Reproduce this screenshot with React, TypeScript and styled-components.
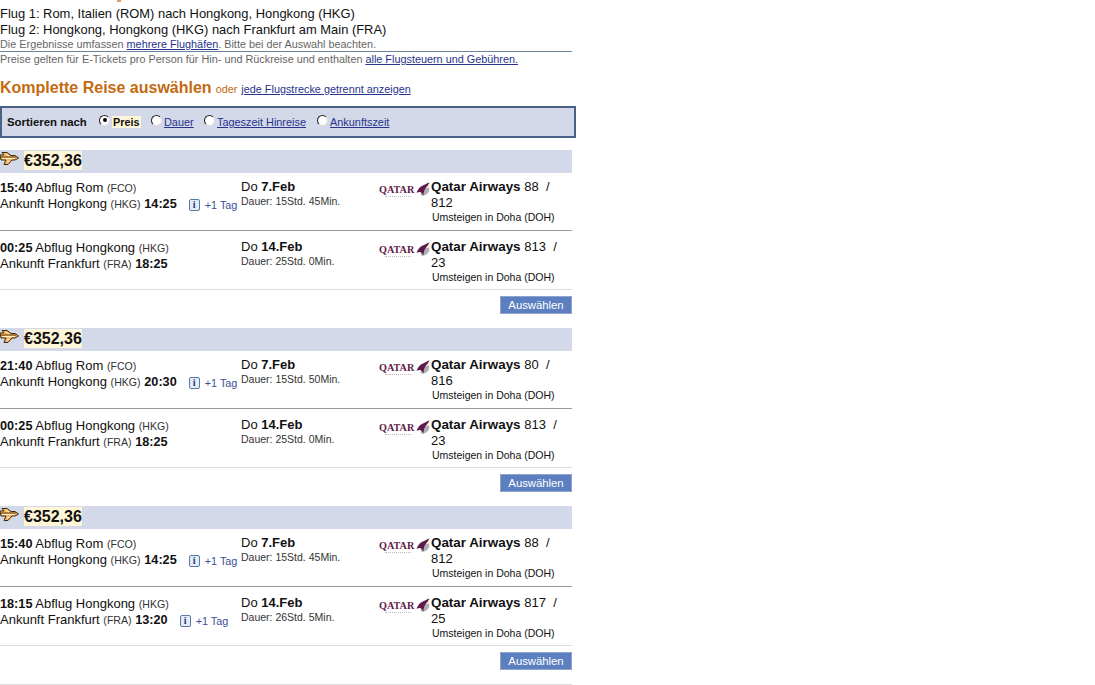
import styled, { createGlobalStyle } from 'styled-components';

const GlobalStyle = createGlobalStyle`
  html, body {
    margin: 0;
    padding: 0;
    background: #fff;
    font-family: "Liberation Sans", Arial, sans-serif;
    overflow: hidden;
  }
`;

const Page = styled.div`
  width: 576px;
  height: 685px;
  overflow: hidden;
`;

const CutHeading = styled.div`
  height: 6px;
  position: relative;
  &::after {
    content: '';
    position: absolute;
    left: 117px;
    top: 0;
    width: 4px;
    height: 2px;
    background: #e0a060;
  }
`;

const RouteLine = styled.div`
  font-size: 12.93px;
  line-height: 16px;
  height: 16px;
  color: #111;
  white-space: nowrap;
`;

const SmallNote = styled.div<{ $rule?: boolean }>`
  width: 572px;
  font-size: 10.85px;
  line-height: 14px;
  color: #666;
  white-space: nowrap;
  height: 14px;
  margin-top: ${({ $rule }) => ($rule ? '-1px' : '0')};
  border-bottom: ${({ $rule }) => ($rule ? '1px solid #6b8299' : 'none')};
  a {
    color: #27338c;
    text-decoration: underline;
  }
`;

const Heading = styled.div`
  margin-top: 13px;
  height: 19px;
  display: flex;
  align-items: baseline;
  gap: 4px;
  white-space: nowrap;
  font-size: 10.85px;
  color: #c46a10;
  a {
    color: #27338c;
    text-decoration: underline;
  }
`;

const HeadingTitle = styled.span`
  font-size: 16px;
  font-weight: bold;
  color: #c46a10;
`;

const SortBar = styled.div`
  margin: 8px 0 12px;
  box-sizing: border-box;
  width: 576px;
  height: 32px;
  border: 2px solid #4a6288;
  background: #d3d9e8;
  display: flex;
  align-items: center;
  padding-left: 5px;
  font-size: 10.9px;
  white-space: nowrap;
  a {
    color: #27338c;
    text-decoration: underline;
  }
`;

const SortLabel = styled.b`
  color: #111;
  width: 92px;
  font-size: 11.4px;
`;

const SortOption = styled.label<{ $width: number }>`
  display: flex;
  align-items: center;
  width: ${({ $width }) => $width}px;
  gap: 2px;
`;

const Radio = styled.span<{ $checked?: boolean }>`
  width: 11px;
  height: 11px;
  box-sizing: border-box;
  border-radius: 50%;
  background: #fff;
  border: 1px solid #ddd;
  border-top-color: #222;
  border-left-color: #222;
  margin-top: -4px;
  display: flex;
  align-items: center;
  justify-content: center;
  &::after {
    content: '';
    display: ${({ $checked }) => ($checked ? 'block' : 'none')};
    width: 4px;
    height: 4px;
    border-radius: 50%;
    background: #000;
  }
`;

const Selected = styled.b`
  background: #fff6d8;
  color: #111;
  padding: 0 1px;
`;

const Offer = styled.div`
  width: 572px;
  margin-bottom: 14px;
`;

const PriceBar = styled.div`
  height: 23px;
  background: #d3d9e8;
  display: flex;
  align-items: flex-start;
  gap: 5px;
`;

const PlaneIcon = styled.svg`
  width: 19px;
  height: 14px;
  margin-top: 2px;
  flex: none;
`;

const Price = styled.span`
  margin-top: 1px;
  background: #fff6d8;
  font-size: 16px;
  font-weight: bold;
  line-height: 19px;
  color: #111;
`;

const Segment = styled.div<{ $height: number; $dark?: boolean }>`
  height: ${({ $height }) => $height}px;
  box-sizing: border-box;
  padding-top: ${({ $dark }) => ($dark ? '7px' : '9px')};
  border-bottom: 1px solid ${({ $dark }) => ($dark ? '#999' : '#ddd')};
  display: grid;
  grid-template-columns: 241px 138px 52px 141px;
`;

const Times = styled.div`
  font-size: 13px;
  line-height: 16px;
  color: #111;
  white-space: nowrap;
  b {
    font-size: 12.7px;
  }
  small {
    font-size: 10.6px;
    color: #333;
  }
`;

const NextDay = styled.span<{ $gap: number }>`
  margin-left: ${({ $gap }) => $gap}px;
  font-size: 10.85px;
  color: #3a4f96;
  display: inline-flex;
  align-items: center;
  gap: 5px;
  vertical-align: 0;
`;

const InfoBadge = styled.i`
  width: 11px;
  height: 12px;
  box-sizing: border-box;
  border: 1px solid #5878a8;
  border-radius: 2px;
  background: #e4ecf6;
  color: #22407a;
  font: bold 10px/10px "Liberation Serif", serif;
  text-align: center;
`;

const DateCell = styled.div`
  font-size: 13px;
  line-height: 14px;
  color: #111;
  white-space: nowrap;
`;

const Duration = styled.div`
  font-size: 10.5px;
  line-height: 13px;
  margin-top: 1px;
  color: #333;
`;

const Logo = styled.div`
  display: flex;
  align-items: flex-start;
  gap: 1px;
  height: 15px;
  margin-top: 2px;
`;

const LogoWords = styled.div`
  font: bold 10.2px/12px "Liberation Serif", serif;
  color: #5e1a48;
  width: 36px;
  margin-top: 2px;
  height: 11px;
  &::after {
    content: '';
    display: block;
    width: 26px;
    margin: 0 0 0 6px;
    border-top: 1px dotted #c4b4bf;
  }
`;

const LogoMark = styled.svg`
  width: 14px;
  height: 14px;
  flex: none;
`;

const Carrier = styled.div`
  font-size: 13px;
  line-height: 16px;
  margin-top: -1px;
  color: #111;
  b {
    font-size: 13.4px;
  }
`;

const Stopover = styled.div`
  font-size: 10.5px;
  line-height: 12px;
  margin: 0 0 0 1px;
  color: #111;
`;

const Actions = styled.div`
  display: flex;
  justify-content: flex-end;
  padding-top: 6px;
`;

const SelectButton = styled.button`
  width: 72px;
  height: 18px;
  padding: 0;
  border: 1px solid #8ea4cf;
  background: #5c7fc0;
  color: #fff;
  font: 11.3px "Liberation Sans", Arial, sans-serif;
`;

const BottomRule = styled.div`
  width: 572px;
  border-top: 1px solid #ddd;
`;

type Leg = {
  dep: string;
  from: string;
  fromCode: string;
  to: string;
  toCode: string;
  arr: string;
  nextDayGap?: number;
  date: string;
  duration: string;
  flight: string;
  second: string;
};

const outA: Leg = {
  dep: '15:40', from: 'Rom', fromCode: 'FCO', to: 'Hongkong', toCode: 'HKG', arr: '14:25', nextDayGap: 12,
  date: '7.Feb', duration: 'Dauer: 15Std. 45Min.', flight: '88', second: '812',
};
const outB: Leg = {
  dep: '21:40', from: 'Rom', fromCode: 'FCO', to: 'Hongkong', toCode: 'HKG', arr: '20:30', nextDayGap: 12,
  date: '7.Feb', duration: 'Dauer: 15Std. 50Min.', flight: '80', second: '816',
};
const backA: Leg = {
  dep: '00:25', from: 'Hongkong', fromCode: 'HKG', to: 'Frankfurt', toCode: 'FRA', arr: '18:25',
  date: '14.Feb', duration: 'Dauer: 25Std. 0Min.', flight: '813', second: '23',
};
const backB: Leg = {
  dep: '18:15', from: 'Hongkong', fromCode: 'HKG', to: 'Frankfurt', toCode: 'FRA', arr: '13:20', nextDayGap: 12,
  date: '14.Feb', duration: 'Dauer: 26Std. 5Min.', flight: '817', second: '25',
};

const offers: [Leg, Leg][] = [
  [outA, backA],
  [outB, backA],
  [outA, backB],
];

const Plane = () => (
  <PlaneIcon viewBox="0 0 19 14">
    <path d="M0 3 L4 3 L2 0.5 L7 0.5 L11 3.5 L15 3.5 L18.5 6 L15 8 L12 8 L8 12.5 L4 12.5 L6 8 L1 8 Z" fill="#f8b95e" stroke="#3d2a10" strokeWidth="1" />
    <path d="M1 5 H16" stroke="#5a3a10" strokeWidth="1" />
    <path d="M6 2 L9 4 M7 9.5 L9.5 9.5 M2 6.5 H15" stroke="#fff1d0" strokeWidth="1" />
  </PlaneIcon>
);

const QatarLogo = () => (
  <Logo>
    <LogoWords>QATAR</LogoWords>
    <LogoMark viewBox="0 0 14 14">
      <path d="M5 13.5 C4 9 8 5 13 5.5 C14.5 10 10 14.5 5 13.5 Z" fill="#aeaeb4" />
      <path d="M0.5 10.5 C2 8 3.5 4.5 7 3.5 C9 2.5 11 1.2 13.5 0.5 C12.5 2 12 3.5 10.5 5 C9 6.5 7.5 9 7.5 13.5 C6.5 11.5 5.5 10.5 4 10 C3 10 2 10.5 0.5 10.5 Z" fill="#5e1a48" />
    </LogoMark>
  </Logo>
);

const FlightSegment = ({ leg, height, dark }: { leg: Leg; height: number; dark?: boolean }) => (
  <Segment $height={height} $dark={dark}>
    <Times>
      <b>{leg.dep}</b> Abflug {leg.from} <small>({leg.fromCode})</small>
      <br />
      Ankunft {leg.to} <small>({leg.toCode})</small> <b>{leg.arr}</b>
      {leg.nextDayGap && (
        <NextDay $gap={leg.nextDayGap}>
          <InfoBadge>i</InfoBadge>+1 Tag
        </NextDay>
      )}
    </Times>
    <DateCell>
      Do <b>{leg.date}</b>
      <Duration>{leg.duration}</Duration>
    </DateCell>
    <QatarLogo />
    <div>
      <Carrier>
        <b>Qatar Airways</b> {leg.flight} &nbsp;/
        <br />
        {leg.second}
      </Carrier>
      <Stopover>Umsteigen in Doha (DOH)</Stopover>
    </div>
  </Segment>
);

export default function App() {
  return (
    <>
      <GlobalStyle />
      <Page>
        <CutHeading />
        <RouteLine>Flug 1: Rom, Italien (ROM) nach Hongkong, Hongkong (HKG)</RouteLine>
        <RouteLine>Flug 2: Hongkong, Hongkong (HKG) nach Frankfurt am Main (FRA)</RouteLine>
        <SmallNote $rule>
          Die Ergebnisse umfassen <a href="#">mehrere Flughäfen</a>. Bitte bei der Auswahl beachten.
        </SmallNote>
        <SmallNote>
          Preise gelten für E-Tickets pro Person für Hin- und Rückreise und enthalten{' '}
          <a href="#">alle Flugsteuern und Gebühren.</a>
        </SmallNote>
        <Heading>
          <HeadingTitle>Komplette Reise auswählen</HeadingTitle> oder{' '}
          <a href="#">jede Flugstrecke getrennt anzeigen</a>
        </Heading>
        <SortBar>
          <SortLabel>Sortieren nach</SortLabel>
          <SortOption $width={52}>
            <Radio $checked />
            <Selected>Preis</Selected>
          </SortOption>
          <SortOption $width={53}>
            <Radio />
            <a href="#">Dauer</a>
          </SortOption>
          <SortOption $width={113}>
            <Radio />
            <a href="#">Tageszeit Hinreise</a>
          </SortOption>
          <SortOption $width={90}>
            <Radio />
            <a href="#">Ankunftszeit</a>
          </SortOption>
        </SortBar>
        {offers.map(([out, back], i) => (
          <Offer key={i}>
            <PriceBar>
              <Plane />
              <Price>€352,36</Price>
            </PriceBar>
            <FlightSegment leg={out} height={58} dark />
            <FlightSegment leg={back} height={59} />
            <Actions>
              <SelectButton>Auswählen</SelectButton>
            </Actions>
          </Offer>
        ))}
        <BottomRule />
      </Page>
    </>
  );
}
